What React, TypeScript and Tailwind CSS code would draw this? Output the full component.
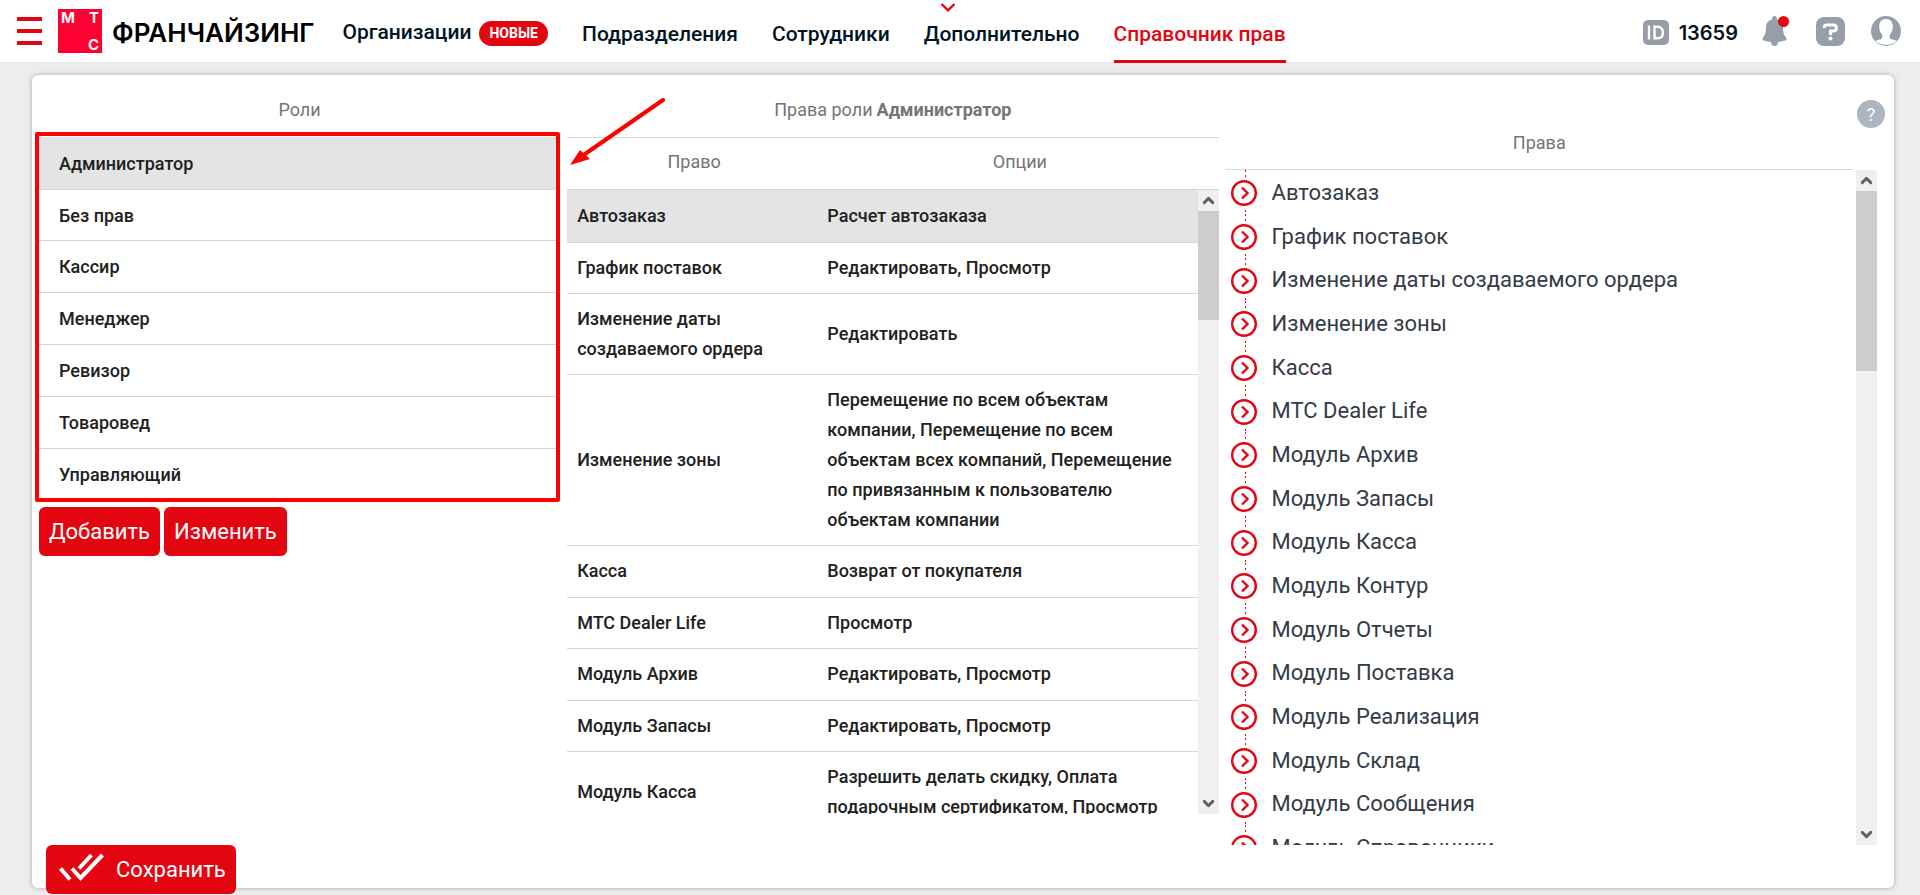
import React from "react";
import { ChevronDown, ChevronUp } from "lucide-react";

const navItems = ["Подразделения", "Сотрудники", "Дополнительно"];

const roles = [
  "Администратор",
  "Без прав",
  "Кассир",
  "Менеджер",
  "Ревизор",
  "Товаровед",
  "Управляющий",
];

const roleRights = [
  { name: "Автозаказ", options: "Расчет автозаказа" },
  { name: "График поставок", options: "Редактировать, Просмотр" },
  { name: "Изменение даты создаваемого ордера", options: "Редактировать" },
  {
    name: "Изменение зоны",
    options:
      "Перемещение по всем объектам компании, Перемещение по всем объектам всех компаний, Перемещение по привязанным к пользователю объектам компании",
  },
  { name: "Касса", options: "Возврат от покупателя" },
  { name: "МТС Dealer Life", options: "Просмотр" },
  { name: "Модуль Архив", options: "Редактировать, Просмотр" },
  { name: "Модуль Запасы", options: "Редактировать, Просмотр" },
  {
    name: "Модуль Касса",
    options: "Разрешить делать скидку, Оплата подарочным сертификатом, Просмотр",
  },
];

const rights = [
  "Автозаказ",
  "График поставок",
  "Изменение даты создаваемого ордера",
  "Изменение зоны",
  "Касса",
  "МТС Dealer Life",
  "Модуль Архив",
  "Модуль Запасы",
  "Модуль Касса",
  "Модуль Контур",
  "Модуль Отчеты",
  "Модуль Поставка",
  "Модуль Реализация",
  "Модуль Склад",
  "Модуль Сообщения",
  "Модуль Справочники",
];

const Logo = () => {
  return (
    <div className="flex flex-col justify-between h-[44px] w-[44px] bg-[#ff0032] px-[3px] font-['Inter','Liberation_Sans',sans-serif] text-[15px] leading-[17px] font-bold text-white">
      <div className="flex justify-between">
        <span>М</span>
        <span>Т</span>
      </div>
      <span className="text-right">С</span>
    </div>
  );
};

const ScrollBar = ({ thumb }: { thumb: string }) => {
  return (
    <div className="flex flex-col items-center w-[21px] shrink-0 bg-[#f0f0f0] text-[#606060]">
      <div className="flex items-center justify-center h-[21px] shrink-0">
        <ChevronUp size={17} strokeWidth={4} />
      </div>
      <div className={`w-full bg-[#cdcdcd] ${thumb}`}></div>
      <div className="flex items-center justify-center h-[21px] shrink-0 mt-auto">
        <ChevronDown size={17} strokeWidth={4} />
      </div>
    </div>
  );
};

const Header = () => {
  return (
    <header className="flex items-center h-[63px] shrink-0 border-b border-[#e2e5eb] bg-white pl-[17px] pr-[19px] text-[#001424]">
      {/* burger */}
      <button type="button" aria-label="Меню" className="flex flex-col gap-2 *:h-1 *:w-[25px] *:bg-[#e30611]">
        <span></span>
        <span></span>
        <span></span>
      </button>
      {/* logo */}
      <a href="#" className="flex items-center gap-[10px] ml-4">
        <Logo />
        <span className="pt-[3px] font-['Inter','Liberation_Sans',sans-serif] text-[26px] leading-8 font-semibold text-black">
          ФРАНЧАЙЗИНГ
        </span>
      </a>
      {/* nav */}
      <nav className="flex items-center gap-[34px] self-stretch ml-7 text-[21px] font-medium">
        <a href="#" className="flex items-center gap-2 pt-1">
          Организации
          <span className="flex items-center h-[25px] px-[10px] rounded-full bg-[#e30611] text-[14px] font-bold text-white">
            НОВЫЕ
          </span>
        </a>
        {navItems.map((item) => (
          <a key={item} href="#" className="relative flex items-center h-full pt-[7px]">
            {item}
            {item === "Дополнительно" && (
              <svg className="absolute top-[3px] left-4" width="16" height="9" viewBox="0 0 16 9" fill="none" stroke="#e30611" strokeWidth="2.4">
                <path d="M1.5 1 8 7.3 14.5 1" />
              </svg>
            )}
          </a>
        ))}
        <a href="#" className="flex items-center self-stretch -mb-px pt-[7px] text-[#e30611] shadow-[inset_0_-3px_0_#e30611]">
          Справочник прав
        </a>
      </nav>
      {/* user */}
      <div className="flex items-center ml-auto">
        <div className="flex items-center gap-[10px] pt-[3px]">
          <svg width="26" height="25" viewBox="0 0 26 25" fill="none">
            <rect width="26" height="25" rx="5" fill="#969fa8" />
            <path d="M6 5.5v14M11.5 6.7v11.6h3.2c3.2 0 5.2-2.200 5.200-5.800s-2-5.800-5.200-5.800z" stroke="#fff" strokeWidth="2.400" />
          </svg>
          <span className="font-['Inter','Liberation_Sans',sans-serif] text-[20px] font-semibold">13659</span>
        </div>
        <button type="button" aria-label="Уведомления" className="ml-6">
          <svg width="28" height="30" viewBox="0 0 28 30">
            <path d="M10 3.500C10 1.500 10.800 0 12.500 0s2.500 1.500 2.500 3.500c4.500 1 6 4.500 6 8.500 0 5 1 7 3 9.500.8 1 .8 3-.7 3-2.600.8-5.300 1.200-7.300 1.400 0 2.500-1.500 4.100-3.500 4.100s-3.500-1.600-3.500-4.100c-2-.2-4.700-.6-7.300-1.400-1.500 0-1.500-2-.7-3C3 19 4 17 4 12c0-4 1.500-7.500 6-8.500z" fill="#969fa8" />
            <circle cx="21.500" cy="5.500" r="5.500" fill="#e30611" />
          </svg>
        </button>
        <button type="button" aria-label="Помощь" className="ml-[26px]">
          <svg width="29" height="29" viewBox="0 0 29 29" fill="none">
            <rect width="29" height="29" rx="8" fill="#969fa8" />
            <path d="M8.500 11V9.500Q8.500 8 10.500 8H17q3.500 0 3.500 3t-3.500 3h-2.500v4" stroke="#fff" strokeWidth="3" />
            <circle cx="14.500" cy="21.500" r="2" fill="#fff" />
          </svg>
        </button>
        <button type="button" aria-label="Профиль" className="ml-[26px]">
          <svg width="30" height="30" viewBox="0 0 30 30">
            <circle cx="15" cy="15" r="15" fill="#969fa8" />
            <path d="M15 3c4.300 0 6.800 3 6.800 7.500 0 3.500-1.200 6.500-3 8v3c0 2 5.200 2.200 6.700 3.500A14 14 0 0 1 15 28.800 14 14 0 0 1 4.500 25c1.500-1.300 6.700-1.500 6.700-3.500v-3c-1.800-1.500-3-4.500-3-8C8.200 6 10.700 3 15 3z" fill="#fff" />
          </svg>
        </button>
      </div>
    </header>
  );
};

const RolesColumn = () => {
  return (
    <section className="relative">
      <table className="w-full">
        <thead>
          <tr className="h-[62px] text-[#757575]">
            <th className="pt-[6px] font-normal">Роли</th>
          </tr>
        </thead>
        <tbody>
          {roles.map((role) => (
            <tr key={role} className="h-[52px] nth-2:h-[51px] border-b border-[#d4d6da] first:bg-[#e4e4e4] last:border-0">
              <td className="pl-5 pt-px">{role}</td>
            </tr>
          ))}
        </tbody>
      </table>
      {/* highlight frame and pointer */}
      <div className="absolute top-[57px] -left-1 right-0 h-[370px] rounded-xs border-4 border-[#ff0000]"></div>
      <svg className="absolute top-[22px] -right-[105px] z-10" width="96" height="70" viewBox="0 0 96 70">
        <path d="M94 3 16 57" stroke="#ff0000" strokeWidth="4" strokeLinecap="round" />
        <path d="M1 68 11 53 21 62z" fill="#ff0000" />
      </svg>
      <div className="flex gap-1 mt-[7px]">
        <button type="button" className="h-[49px] px-[10px] rounded-md bg-[#e30611] text-[22px] font-normal text-white">
          Добавить
        </button>
        <button type="button" className="h-[49px] px-[10px] rounded-md bg-[#e30611] text-[22px] font-normal text-white">
          Изменить
        </button>
      </div>
    </section>
  );
};

const RoleRightsColumn = () => {
  return (
    <section className="flex flex-col min-h-0 mb-[31px]">
      <h2 className="flex items-center justify-center gap-1 h-[63px] shrink-0 pt-[6px] border-b border-[#d4d6da] font-normal text-[#757575]">
        Права роли <b>Администратор</b>
      </h2>
      <div className="flex h-[52px] shrink-0 items-center pb-1 border-b border-[#d4d6da] font-normal text-[#757575]">
        <span className="w-[39%] text-center">Право</span>
        <span className="flex-1 text-center">Опции</span>
      </div>
      <div className="flex flex-1 min-h-0">
        <div className="flex-1 overflow-hidden">
          <table className="w-full table-fixed">
            <colgroup>
              <col className="w-[40%]" />
              <col />
            </colgroup>
            <tbody>
              {roleRights.map((item) => (
                <tr key={item.name} className="h-[52px] even:h-[51px] border-b border-[#d4d6da] first:bg-[#e4e4e4] *:py-[10px] *:leading-[30px]">
                  <td className="pl-[10px] pr-8">{item.name}</td>
                  <td className="pl-2 pr-6">{item.options}</td>
                </tr>
              ))}
            </tbody>
          </table>
        </div>
        <ScrollBar thumb="h-[109px]" />
      </div>
    </section>
  );
};

const RightsColumn = () => {
  return (
    <section className="flex flex-col min-h-0">
      <div className="relative mr-6 h-[95px] shrink-0 border-b border-[#d4d6da] text-center font-normal text-[#757575]">
        <h2 className="pt-[54px]">Права</h2>
        <button type="button" aria-label="Справка" className="absolute top-[25px] -right-8 h-7 w-7 rounded-full bg-[#acb6c0] text-white">
          ?
        </button>
      </div>
      <div className="flex flex-1 min-h-0">
        <ul className="flex-1 overflow-hidden pl-[5px] text-[22px] font-normal text-[#333b48]">
          {rights.map((item) => (
            <li key={item} className="flex items-center gap-[15px] h-11 nth-[3n]:h-[43px]">
              <svg width="26" height="44" viewBox="0 0 26 44" fill="none" stroke="#e30611">
                <path d="M14.500 0v44" strokeDasharray="2 3" />
                <circle cx="13" cy="23" r="15" fill="#fff" stroke="none" />
                <circle cx="13" cy="23" r="11.800" strokeWidth="2.400" />
                <path d="m11 17.500 5.500 5.500-5.500 5.500" strokeWidth="2.400" />
              </svg>
              {item}
            </li>
          ))}
        </ul>
        <ScrollBar thumb="h-[180px]" />
      </div>
    </section>
  );
};

const App = () => {
  return (
    <div className="flex flex-col h-screen overflow-hidden bg-[#ededed] font-['Roboto','Liberation_Sans',sans-serif] text-[18px] font-medium text-[#212121]">
      <Header />
      <main className="flex flex-col flex-1 min-h-0 mt-3 mb-[7px] ml-8 mr-[26px] rounded-md bg-white pl-[7px] pr-[17px] shadow-[0_0_5px_rgba(0,0,0,0.3)]">
        <div className="grid flex-1 min-h-0 grid-cols-[28fr_35fr_35fr] gap-[7px]">
          <RolesColumn />
          <RoleRightsColumn />
          <RightsColumn />
        </div>
        {/* save */}
        <button type="button" className="flex items-center gap-3 h-[49px] w-fit shrink-0 ml-[7px] -mb-[6px] pl-3 pr-[10px] rounded-md bg-[#e30611] text-[22px] font-normal text-white">
          <svg className="overflow-visible" width="46" height="28" viewBox="0 0 46 28" fill="none" stroke="#fff" strokeWidth="4">
            <path d="M2.500 12.500 12 23.500M14 12.500 22.500 22 44.500-1M21 12.500 33.500-1" />
          </svg>
          Сохранить
        </button>
      </main>
    </div>
  );
};

export default App;
